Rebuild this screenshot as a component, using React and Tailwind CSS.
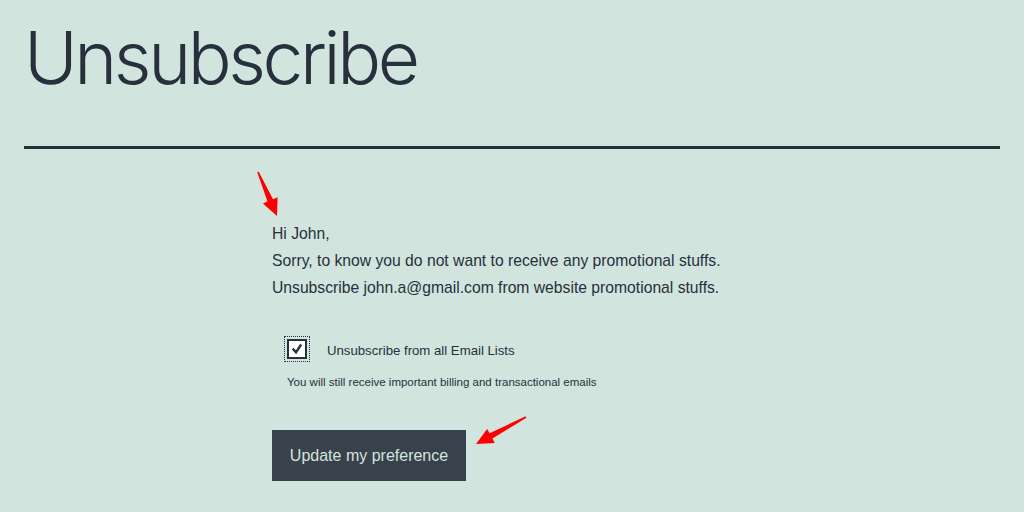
import React from 'react';

// red annotation arrow drawn from tail to tip
const arrowPoints = (x1, y1, x2, y2) => {
  const len = Math.hypot(x2 - x1, y2 - y1);
  const ux = (x2 - x1) / len;
  const uy = (y2 - y1) / len;
  const nx = -uy;
  const ny = ux;
  const head = 17;
  const hx = x2 - ux * head;
  const hy = y2 - uy * head;
  const pts = [
    [x1 + nx * 0.8, y1 + ny * 0.8],
    [hx + nx * 3, hy + ny * 3],
    [hx + nx * 8, hy + ny * 8],
    [x2, y2],
    [hx - nx * 8, hy - ny * 8],
    [hx - nx * 3, hy - ny * 3],
    [x1 - nx * 0.8, y1 - ny * 0.8],
  ];
  return pts.map((p) => p.join(',')).join(' ');
};

export default function App() {
  return (
    <div
      className="relative w-[1024px] h-[512px] overflow-hidden bg-[#d1e4dd] text-[#28303d]"
      style={{ fontFamily: '"Liberation Sans", Arial, sans-serif' }}
    >
      {/* Title */}
      <div className="px-6 pt-[14px]">
        <h1
          className="text-[73px] leading-[88px] font-light tracking-[-3.4px]"
          style={{ fontFamily: 'Inter, "Liberation Sans", sans-serif' }}
        >
          Unsubscribe
        </h1>
        <div className="mt-[44px] h-[3px] w-[976px] bg-[#28303d]" />
      </div>

      {/* Body */}
      <div className="pl-[272px] pt-[71px]">
        <div className="text-[15.7px] leading-[27px]">
          <p>Hi John,</p>
          <p>Sorry, to know you do not want to receive any promotional stuffs.</p>
          <p>Unsubscribe john.a@gmail.com from website promotional stuffs.</p>
        </div>

        <div className="mt-[35px] pl-[12px]">
          <label className="flex items-center gap-[17px]">
            <span className="w-[26px] h-[26px] flex items-center justify-center border border-dotted border-[#28303d]">
              <span className="w-[20px] h-[20px] bg-white border-2 border-[#28303d] flex items-center justify-center">
                <svg width="12" height="12" viewBox="0 0 12 12" fill="none">
                  <path d="M2.5 6.5 L5 9.3 L9.5 2.5" stroke="#28303d" strokeWidth="2.4" strokeLinecap="square" />
                </svg>
              </span>
            </span>
            <span className="pt-[3px] text-[13.2px]">Unsubscribe from all Email Lists</span>
          </label>
          <p className="mt-[12px] pl-[3px] text-[11.5px]">You will still receive important billing and transactional emails</p>
        </div>

        <button className="mt-[39px] w-[194px] h-[51px] bg-[#39414d] text-[#d1e4dd] text-[16px]">
          Update my preference
        </button>
      </div>

      {/* Annotation arrows */}
      <svg className="absolute inset-0 pointer-events-none" width="1024" height="512">
        <polygon points={arrowPoints(258, 172, 277, 216)} fill="#ff0000" />
        <polygon points={arrowPoints(526, 417, 476, 444)} fill="#ff0000" />
      </svg>
    </div>
  );
}
